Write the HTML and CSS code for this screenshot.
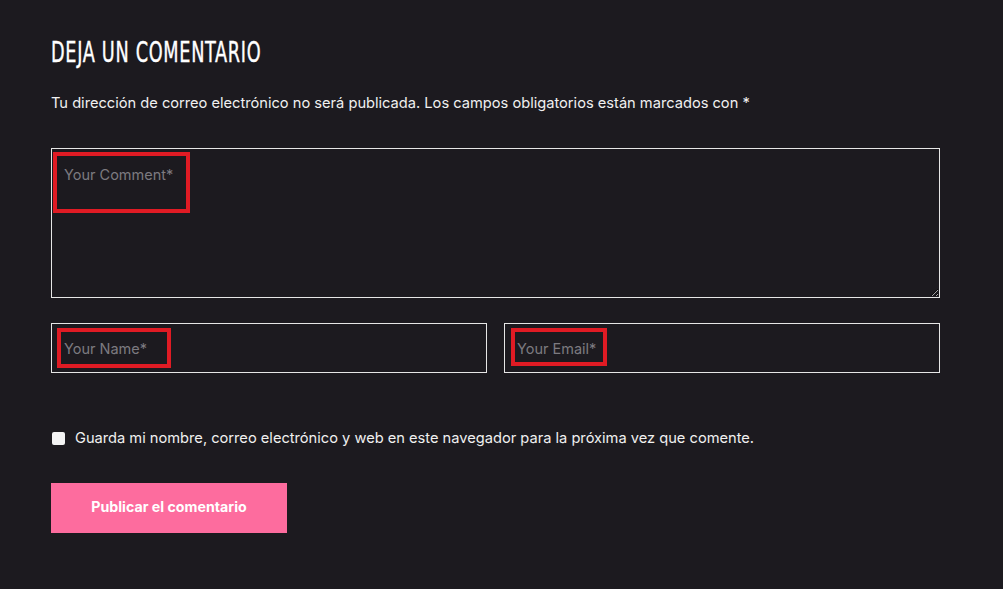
FILE: index.html
```html
<!DOCTYPE html>
<html lang="es">
<head>
<meta charset="utf-8">
<title>Deja un comentario</title>
<link rel="stylesheet" href="styles.css">
</head>
<body>
<section class="respond">
  <h3 class="title">DEJA UN COMENTARIO</h3>
  <p class="notes">Tu dirección de correo electrónico no será publicada. Los campos obligatorios están marcados con *</p>
  <form class="form">
    <div class="field field-comment">
      <textarea class="textarea" placeholder="Your Comment*"></textarea>
      <span class="mark mark-comment"></span>
    </div>
    <div class="row">
      <div class="field">
        <input class="input" type="text" placeholder="Your Name*">
        <span class="mark mark-name"></span>
      </div>
      <div class="field">
        <input class="input" type="email" placeholder="Your Email*">
        <span class="mark mark-email"></span>
      </div>
    </div>
    <label class="consent">
      <span class="box"></span>
      <span>Guarda mi nombre, correo electrónico y web en este navegador para la próxima vez que comente.</span>
    </label>
    <button class="submit" type="button">Publicar el comentario</button>
  </form>
</section>
</body>
</html>
```

FILE: styles.css
```css
html, body {
  margin: 0;
  padding: 0;
  background: #1c1a1f;
}
body {
  font-family: "Inter", "DejaVu Sans", sans-serif;
  color: #f2f2f2;
}
.respond {
  padding: 38px 0 0 51px;
  width: 889px;
}
.title {
  margin: 0;
  font-family: "DejaVu Sans Condensed", "DejaVu Sans", sans-serif;
  font-stretch: condensed;
  font-weight: normal;
  font-size: 28.5px;
  line-height: 30px;
  letter-spacing: 1px;
  color: #ffffff;
  -webkit-text-stroke: 0.4px #ffffff;
  transform: scaleX(0.69);
  transform-origin: left center;
  white-space: nowrap;
}
.notes {
  margin: 25px 0 0;
  font-size: 14.65px;
  line-height: 20px;
  color: #f0f0f0;
  white-space: nowrap;
}
.form {
  margin-top: 35px;
  display: flex;
  flex-direction: column;
}
.field {
  position: relative;
  display: flex;
}
.textarea {
  box-sizing: border-box;
  width: 889px;
  height: 150px;
  margin: 0;
  padding: 17px 12px;
  background: transparent;
  border: 1px solid #e6e6e6;
  color: #fff;
  font-family: "Inter", sans-serif;
  font-size: 14.5px;
  resize: vertical;
  outline: none;
}
.row {
  display: grid;
  grid-template-columns: 436px 436px;
  column-gap: 17px;
  margin-top: 25px;
}
.input {
  box-sizing: border-box;
  width: 100%;
  height: 50px;
  margin: 0;
  padding: 0 12px;
  background: transparent;
  border: 1px solid #e6e6e6;
  color: #fff;
  font-family: "Inter", sans-serif;
  font-size: 14.5px;
  outline: none;
}
::placeholder {
  color: #7c7a80;
  opacity: 1;
}
.mark {
  position: absolute;
  box-sizing: border-box;
  border: 4px solid #e01b24;
  pointer-events: none;
}
.mark-comment { left: 2px; top: 4px; width: 137px; height: 61px; }
.mark-name { left: 6px; top: 5px; width: 114px; height: 40px; }
.mark-email { left: 7px; top: 5px; width: 96px; height: 38px; }
.consent {
  margin-top: 55px;
  display: flex;
  align-items: center;
  gap: 10px;
  font-size: 14.65px;
  line-height: 20px;
  color: #f0f0f0;
  white-space: nowrap;
}
.box {
  width: 13px;
  height: 13px;
  margin-left: 1px;
  background: #f4f4f4;
  border-radius: 2px;
  flex: none;
}
.submit {
  margin-top: 35px;
  align-self: flex-start;
  width: 236px;
  height: 50px;
  padding: 0 0 3px;
  border: 0;
  background: #fd6c9e;
  color: #ffffff;
  font-family: "Inter", sans-serif;
  font-weight: 700;
  font-size: 14.2px;
  cursor: pointer;
}
```
